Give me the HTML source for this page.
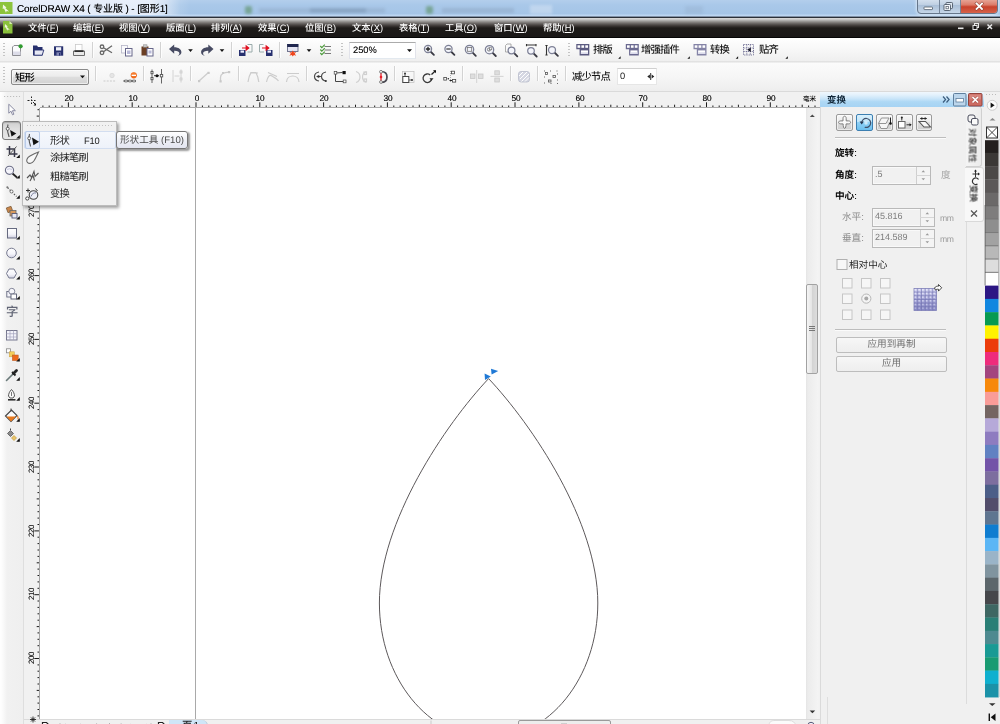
<!DOCTYPE html>
<html><head><meta charset="utf-8"><title>CorelDRAW X4</title>
<style>
*{box-sizing:border-box;margin:0;padding:0}
html,body{width:1000px;height:724px;overflow:hidden;background:#f0f0f0}
body{position:relative;-webkit-font-smoothing:antialiased;text-rendering:geometricPrecision;font-family:"Liberation Sans","Noto Sans CJK SC",sans-serif;font-size:9.5px;color:#000;line-height:1}
.a{position:absolute}
.t{position:absolute;white-space:nowrap;line-height:12px;height:12px;will-change:transform}
svg{position:absolute;overflow:visible}
#title{left:0;top:0;width:1000px;height:17px;background:linear-gradient(#b3ceec 0,#a9c8e9 5px,#a5c5e7 14px,#bcd6f2 15px,#bcd6f2 16px,#7f90a6 16px,#7f90a6 17px);overflow:hidden}
#menu{left:0;top:17px;width:1000px;height:21px;background:linear-gradient(#2a3038 0,#2a3038 1px,#d6d6d6 1px,#d2d2d2 2px,#aeadac 3.500px,#8a8785 5px,#5e5a58 7px,#3a3533 9px,#1e1b19 11px,#1a1817 19.500px,#060606 20px,#060606 21px)}
#menu .t{top:5px;color:#fff;font-size:9.300px;line-height:13px;height:13px;font-weight:500}
#menu u{text-decoration:underline;text-underline-offset:1px}
#tb1{left:0;top:38px;width:1000px;height:24px;background:linear-gradient(#ffffff,#f7f7f7 50%,#eeeeee)}
#tb2{left:0;top:62px;width:1000px;height:30px;background:linear-gradient(#e0e0e0 0,#fbfbfb 1px,#f6f6f6 50%,#ededed 100%)}
#toolbox{left:0;top:92px;width:24px;height:632px;background:linear-gradient(90deg,#ffffff 0,#fcfcfc 2px,#f1f1f1 7px,#efefef 100%);border-right:1px solid #dedede}
#rulerh{left:24px;top:92px;width:796px;height:16px;background:#f1f1f1}
#rulerv{left:24px;top:108px;width:16px;height:611px;background:#f1f1f1}
#canvas{left:40px;top:108px;width:766px;height:611px;background:#fff;overflow:hidden}
#vscroll{left:806px;top:108px;width:14px;height:611px;background:linear-gradient(90deg,#e5e5e5 0,#ececec 2px,#efefef 6px,#f4f4f4 12px,#f1f1f1 14px)}
#bottom{left:24px;top:719px;width:797px;height:5px;background:#f0f0f0;overflow:hidden}
#docker{left:820px;top:92px;width:165px;height:632px;background:#f0f0f0}
#palette{left:985px;top:92px;width:15px;height:632px;background:#f0f0f0}
.c{font-size:10.300px;letter-spacing:-.8px;font-weight:500}
.sep{position:absolute;width:1px;background:#d3d3d3;box-shadow:1px 0 0 #fdfdfd}
.grip{position:absolute;width:2px;background-image:repeating-linear-gradient(#c4c4c4 0,#c4c4c4 1px,transparent 1px,transparent 3px)}
</style></head><body>
<div id="title" class="a"><div class="a" style="left:0;top:0;width:1000px;height:15px;background:linear-gradient(90deg,rgba(250,250,255,.74) 0,rgba(250,250,255,.74) 150px,rgba(250,250,255,.5) 166px,rgba(255,255,255,.1) 180px,rgba(255,255,255,0) 190px)"></div><div class="a" style="left:205px;top:0;width:700px;height:16px;filter:blur(1.800px);opacity:.5"><div class="a" style="left:40px;top:6px;width:7px;height:8px;background:#4a8446;border-radius:2px"></div><div class="a" style="left:54px;top:8px;width:126px;height:5px;background:#8096b0;opacity:.6"></div><div class="a" style="left:105px;top:8px;width:56px;height:5px;background:#5f7894;opacity:.7"></div><div class="a" style="left:221px;top:6px;width:7px;height:8px;background:#4a8446;border-radius:2px"></div><div class="a" style="left:237px;top:8px;width:72px;height:5px;background:#7f94ad;opacity:.65"></div><div class="a" style="left:325px;top:5px;width:22px;height:9px;background:#e6eef8;opacity:.8"></div><div class="a" style="left:480px;top:6px;width:18px;height:8px;background:#8fa8c4;opacity:.6"></div></div><svg style="left:0;top:1px" width="13" height="14" viewBox="0 0 13 14"><rect x="0" y="1" width="12.5" height="12" fill="#8cc43c"/><path d="M3 3.5l3.5 3-1.2.6 3.7 3.4-2.4-.4-.6 1.6-2-4.2-1.3.6z" fill="#f2f8e6"/></svg><span class="t" style="left:17px;top:4px;font-size:10px;letter-spacing:-.12px;color:#000;text-shadow:0 0 .4px rgba(0,0,0,.55)">CorelDRAW X4 ( 专业版 ) - [图形1]</span><div class="a" style="left:917px;top:-3px;width:81px;height:17px;border:1px solid #66768a;border-radius:0 0 4px 4px;overflow:hidden;box-shadow:0 0 3px 1px rgba(255,255,255,.55);background:linear-gradient(#dbe6f2,#bccde1 50%,#abc0d8 50%,#c6d6e8)"><div class="a" style="left:21px;top:0;width:1px;height:17px;background:#74859a"></div><div class="a" style="left:42px;top:0;width:39px;height:17px;border-left:1px solid #74859a;background:linear-gradient(#eab3a6,#dc7c6a 40%,#c8412b 52%,#d45f48 85%,#e6977a)"></div></div><svg style="left:917px;top:0" width="83" height="15" viewBox="0 0 83 15"><rect x="7" y="7" width="8.500" height="2.600" rx=".6" fill="#fff" stroke="#4d5866" stroke-width=".8"/><rect x="29" y="2.500" width="6.500" height="6" rx=".8" fill="#dfe8f2" stroke="#4d5866" stroke-width=".9"/><rect x="27" y="4.500" width="6.500" height="6" rx=".8" fill="#f4f7fb" stroke="#4d5866" stroke-width=".9"/><rect x="29" y="6.500" width="2.500" height="2.300" fill="#fff" stroke="#4d5866" stroke-width=".7"/><path d="M59.500 3.500l5.500 5.500M65 3.500l-5.500 5.500" stroke="#7a3226" stroke-width="3" stroke-linecap="square" opacity=".75"/><path d="M59.500 3.500l5.500 5.500M65 3.500l-5.500 5.500" stroke="#fff" stroke-width="1.800" stroke-linecap="square"/></svg></div>
<div id="menu" class="a"><svg style="left:3px;top:4px" width="10" height="13" viewBox="0 0 10 13"><path d="M0 0h6.500l3 3v9.500h-9.500z" fill="#8ac03c"/><path d="M6.500 0l3 3h-3z" fill="#d8ebb5"/><path d="M2 3l2.800 2.400-1 .5 3 2.800-2-.3-.5 1.300-1.600-3.400-1 .5z" fill="#eef6dc"/></svg><span class="t" style="left:28px">文件(<u>F</u>)</span><span class="t" style="left:73px">编辑(<u>E</u>)</span><span class="t" style="left:119px">视图(<u>V</u>)</span><span class="t" style="left:166px">版面(<u>L</u>)</span><span class="t" style="left:211px">排列(<u>A</u>)</span><span class="t" style="left:258px">效果(<u>C</u>)</span><span class="t" style="left:305px">位图(<u>B</u>)</span><span class="t" style="left:352px">文本(<u>X</u>)</span><span class="t" style="left:399px">表格(<u>T</u>)</span><span class="t" style="left:445px">工具(<u>O</u>)</span><span class="t" style="left:494px">窗口(<u>W</u>)</span><span class="t" style="left:543px">帮助(<u>H</u>)</span><svg style="left:955px;top:4px" width="42" height="12" viewBox="0 0 42 12"><rect x="3" y="6.500" width="5.500" height="1.600" fill="#e8e8e8"/><rect x="19.500" y="2.500" width="4" height="4" fill="none" stroke="#e8e8e8" stroke-width="1"/><rect x="18" y="4.500" width="4" height="4" fill="#151313" stroke="#e8e8e8" stroke-width="1"/><path d="M32.500 3.500l4.500 4.500M37 3.500l-4.500 4.500" stroke="#e8e8e8" stroke-width="1.500"/></svg></div>

<div id="tb1" class="a"></div><div id="tb2" class="a"></div><div class="a" style="left:0;top:61px;width:1000px;height:1px;background:#e2e2e2"></div><div class="a" style="left:0;top:91px;width:1000px;height:1px;background:#dadada"></div><div class="grip" style="left:3px;top:43px;height:15px"></div><div class="grip" style="left:341px;top:43px;height:15px"></div><div class="grip" style="left:568px;top:43px;height:15px"></div><div class="grip" style="left:3px;top:67px;height:18px"></div><div class="sep" style="left:92px;top:42px;height:16px"></div><div class="sep" style="left:160px;top:42px;height:16px"></div><div class="sep" style="left:231px;top:42px;height:16px"></div><div class="sep" style="left:279px;top:42px;height:16px"></div><div class="sep" style="left:95px;top:66px;height:15px"></div><div class="sep" style="left:143px;top:66px;height:15px"></div><div class="sep" style="left:190px;top:66px;height:15px"></div><div class="sep" style="left:238px;top:66px;height:15px"></div><div class="sep" style="left:306px;top:66px;height:15px"></div><div class="sep" style="left:394px;top:66px;height:15px"></div><div class="sep" style="left:462px;top:66px;height:15px"></div><div class="sep" style="left:510px;top:66px;height:15px"></div><div class="sep" style="left:537px;top:66px;height:15px"></div><div class="sep" style="left:565px;top:66px;height:15px"></div><div class="a" style="left:349px;top:42px;width:67px;height:17px;background:#fff;border-top:1px solid #ababab;border-left:1px solid #e2e3ea;border-right:1px solid #e2e3ea;border-bottom:1px solid #e3e9ef"></div><span class="t" style="left:352.500px;top:44px;font-size:9.300px;color:#111;text-shadow:0 0 .4px rgba(0,0,0,.5)">250%</span><span class="t c" style="left:592.5px;top:44.500px;color:#161616">排版</span><span class="t c" style="left:640.5px;top:44.500px;color:#161616">增强插件</span><span class="t c" style="left:709.5px;top:44.500px;color:#161616">转换</span><span class="t c" style="left:758.5px;top:44.500px;color:#161616">贴齐</span><div class="a" style="left:11px;top:69px;width:78px;height:16px;border:1px solid #8a8a8a;border-radius:2px;background:linear-gradient(#f4f4f4,#ececec 45%,#dedede 50%,#d2d2d2);box-shadow:inset 0 0 0 1px rgba(255,255,255,.6)"></div><span class="t c" style="left:15px;top:72.500px;color:#000">矩形</span><span class="t c" style="left:572px;top:71.500px;color:#161616">减少节点</span><div class="a" style="left:617px;top:68px;width:40px;height:17px;background:#fff;border:1px solid #e6e6e6;border-top-color:#d0d0d0"></div><span class="t" style="left:619.500px;top:70px;font-size:9.300px;color:#222">0</span><svg style="left:0;top:0" width="1000" height="100" viewBox="0 0 1000 100"><path d="M12.500 47l1.500-1.500h6.500v10h-8z" fill="#fbfbfd" stroke="#8d8d93" stroke-width="1"/><path d="M13 51.500h7.500v3.500h-7.500z" fill="#dcdce8"/><circle cx="20.600" cy="46.300" r="2.100" fill="#2f9b2f"/><path d="M33 45.500h4l1 1.500h4.500v8.500h-9.500z" fill="#27306e"/><path d="M34.200 50h9.600l-1.600 5.200h-8z" fill="#e6e8f4" stroke="#27306e" stroke-width=".9"/><rect x="54" y="46.300" width="9.200" height="9.400" fill="#27306e"/><rect x="56" y="47.200" width="5.200" height="3.300" fill="#f2f3fa"/><rect x="56.500" y="52.300" width="4.200" height="3.400" fill="#8187b5"/><rect x="59" y="53" width="1.200" height="2.600" fill="#27306e"/><rect x="75.500" y="44.500" width="6.500" height="6" fill="#fff" stroke="#c4c4c4" stroke-width=".7"/><path d="M73.500 51h11v4.500h-11z" fill="#e9e9e9" stroke="#6e6e6e" stroke-width="1"/><rect x="74.500" y="50.300" width="9" height="1.700" fill="#2e2e2e"/><g fill="none" stroke="#666" stroke-width="1.300"><circle cx="102" cy="46.800" r="1.800"/><circle cx="102" cy="52.800" r="1.800"/><path d="M103.500 47.800l8.500 5M103.500 51.800l8.500-6"/></g><rect x="121.500" y="45.500" width="6" height="7.500" fill="#fafafc" stroke="#b5b5c6" stroke-width=".8"/><rect x="125.500" y="48.500" width="6.500" height="7.500" fill="#fff" stroke="#66668a" stroke-width="1"/><rect x="127" y="50.500" width="3.500" height="3.500" fill="#b9b9d8"/><rect x="141.500" y="46.500" width="7" height="9" fill="#6b3f24"/><rect x="143.500" y="44.800" width="3.500" height="2.400" fill="#c9c9c9" stroke="#888" stroke-width=".5"/><rect x="147" y="48.500" width="6" height="7.500" fill="#fff" stroke="#66668a" stroke-width="1"/><rect x="148.500" y="50.500" width="3" height="3" fill="#b9b9d8"/><path d="M169 49l5.200-4.600v2.900c4.500 0 7.200 2.300 7.200 5 0 1.800-1.300 3.200-3.800 3.600 1.300-.9 1.800-1.700 1.800-2.700 0-1.400-1.700-2.400-5.200-2.400v2.900z" fill="#474b63"/><path d="M188.2 49.3h4.6l-2.3 2.6z" fill="#111"/><path d="M213.500 49l-5.200-4.600v2.900c-4.500 0-7.200 2.300-7.200 5 0 1.800 1.300 3.200 3.800 3.600-1.300-.9-1.800-1.700-1.800-2.700 0-1.400 1.700-2.400 5.200-2.400v2.900z" fill="#474b63"/><path d="M219.7 49.3h4.6l-2.3 2.6z" fill="#111"/><path d="M247.500 44.500h4.500v7.500h-4.500" fill="none" stroke="#9aa" stroke-width="1"/><rect x="239" y="50" width="6.500" height="6" fill="#27306e"/><rect x="240.500" y="50.500" width="3.500" height="2.200" fill="#eef"/><path d="M242 48h6M246.200 46l2.500 2-2.500 2z" stroke="#e01020" stroke-width="1.200" fill="#e01020"/><path d="M263.500 44.500h-4v7.500h4.500" fill="none" stroke="#9aa" stroke-width="1"/><rect x="266" y="50" width="6.500" height="6" fill="#27306e"/><rect x="267.500" y="50.500" width="3.500" height="2.200" fill="#eef"/><path d="M262 48h6M266.200 46l2.500 2-2.500 2z" stroke="#e01020" stroke-width="1.200" fill="#e01020"/><rect x="287.500" y="44.500" width="10.500" height="7" fill="#e4e4f2" stroke="#555a78" stroke-width=".8"/><rect x="287.200" y="44" width="11.100" height="3" fill="#20264f"/><path d="M292.800 50.500l1.200 2 2.200-.6-1.400 1.800 1.400 2-2.300-.7-1.100 1.500-1.100-1.500-2.300.7 1.400-2-1.400-1.800 2.200.6z" fill="#f0451c"/><path d="M306.7 49.3h4.6l-2.3 2.6z" fill="#111"/><path d="M320.300 46l1.500 1.600 3-3" fill="none" stroke="#4d9c3c" stroke-width="1.200"/><path d="M324.500 46.5h6.500" stroke="#777" stroke-width="1"/><path d="M320.300 49.5l1.500 1.600 3-3" fill="none" stroke="#4d9c3c" stroke-width="1.200"/><path d="M324.500 50.0h6.500" stroke="#777" stroke-width="1"/><path d="M320.300 53l1.500 1.600 3-3" fill="none" stroke="#4d9c3c" stroke-width="1.200"/><path d="M324.500 53.5h6.500" stroke="#777" stroke-width="1"/><path d="M407.0 49.3h5l-2.5 2.8z" fill="#111"/><path d="M430.5 51.5l3.400 3.400" stroke="#3a3a44" stroke-width="1.800" stroke-linecap="round"/><circle cx="428" cy="49" r="3.6" fill="#f4f5fb" stroke="#7d8096" stroke-width="1.250"/><path d="M425.800 49h4.400M428 46.800v4.400" stroke="#222" stroke-width="1.300"/><path d="M451.0 51.5l3.400 3.400" stroke="#3a3a44" stroke-width="1.800" stroke-linecap="round"/><circle cx="448.5" cy="49" r="3.6" fill="#f4f5fb" stroke="#7d8096" stroke-width="1.250"/><path d="M446.300 49h4.400" stroke="#444" stroke-width="1.300"/><path d="M472.4 52.4l3.400 3.400" stroke="#3a3a44" stroke-width="1.800" stroke-linecap="round"/><circle cx="469.5" cy="49.5" r="4.2" fill="#f4f5fb" stroke="#7d8096" stroke-width="1.250"/><rect x="467.300" y="47.500" width="4.400" height="3.800" fill="none" stroke="#777" stroke-width=".8"/><path d="M492.4 52.6l3.400 3.400" stroke="#3a3a44" stroke-width="1.800" stroke-linecap="round"/><circle cx="489.5" cy="49.7" r="4.2" fill="#f4f5fb" stroke="#7d8096" stroke-width="1.250"/><circle cx="489" cy="49.500" r="1.600" fill="none" stroke="#666" stroke-width=".8"/><rect x="489.500" y="47.800" width="2.300" height="2" fill="#fff" stroke="#666" stroke-width=".6"/><path d="M505.500 45.500l1.500-1.500h4v8h-5.500z" fill="#fafafa" stroke="#999" stroke-width=".8"/><path d="M513.9 52.9l3.400 3.400" stroke="#3a3a44" stroke-width="1.800" stroke-linecap="round"/><circle cx="511.5" cy="50.5" r="3.4" fill="#f4f5fb" stroke="#7d8096" stroke-width="1.250"/><path d="M526 45h10.500M526.500 44v2.200M536 44v2.200" stroke="#333" stroke-width="1.100"/><path d="M533.3 53.1l3.400 3.400" stroke="#3a3a44" stroke-width="1.800" stroke-linecap="round"/><circle cx="531" cy="50.8" r="3.3" fill="#f4f5fb" stroke="#7d8096" stroke-width="1.250"/><path d="M546.500 45v10.500M545.400 45.500h2.200M545.400 55h2.200" stroke="#333" stroke-width="1.100"/><path d="M554.5 52.5l3.400 3.400" stroke="#3a3a44" stroke-width="1.800" stroke-linecap="round"/><circle cx="552" cy="50" r="3.5" fill="#f4f5fb" stroke="#7d8096" stroke-width="1.250"/><g opacity="1"><path d="M576.3 44h13v11.500h-9.700v-6.300h-3.300z" fill="#5b5a80"/><rect x="577.5" y="45.3" width="2.700" height="2.500" fill="#fff"/><rect x="581.4" y="45.3" width="2.700" height="2.500" fill="#fff"/><rect x="585.3" y="45.3" width="2.700" height="2.500" fill="#fff"/><rect x="580.9" y="50.4" width="7.100" height="3.600" fill="#fff"/><rect x="580.9" y="52.3" width="7.100" height="1.700" fill="#dcdcec"/></g><g opacity="1"><path d="M625.8 44h13v11.500h-9.700v-6.300h-3.300z" fill="#6a6990"/><rect x="627.0" y="45.3" width="2.700" height="2.500" fill="#fff"/><rect x="630.9" y="45.3" width="2.700" height="2.500" fill="#fff"/><rect x="634.8" y="45.3" width="2.700" height="2.500" fill="#fff"/><rect x="630.4" y="50.4" width="7.100" height="3.600" fill="#fff"/><rect x="630.4" y="52.3" width="7.100" height="1.700" fill="#dcdcec"/></g><g opacity="1"><path d="M693.5 44h13v11.500h-9.700v-6.300h-3.300z" fill="#8483a6"/><rect x="694.7" y="45.3" width="2.700" height="2.500" fill="#fff"/><rect x="698.6" y="45.3" width="2.700" height="2.500" fill="#fff"/><rect x="702.5" y="45.3" width="2.700" height="2.500" fill="#fff"/><rect x="698.1" y="50.4" width="7.100" height="3.600" fill="#fff"/><rect x="698.1" y="52.3" width="7.100" height="1.700" fill="#dcdcec"/></g><g stroke="#6a6990" stroke-width=".9" fill="none" stroke-dasharray="1.200 1"><rect x="743.500" y="44.500" width="10" height="10.500"/><path d="M746.800 44.500v10.500M750.300 44.500v10.500M743.500 48h10M743.500 51.500h10"/></g><path d="M750.800 47.500v4.500l-3.600-2.200z" fill="#1a1a2a"/><path d="M618.2 58.7l2.400-2.400v2.400z" fill="#111"/><path d="M687.4000000000001 58.7l2.400-2.400v2.400z" fill="#111"/><path d="M735.7 58.7l2.400-2.400v2.400z" fill="#111"/><path d="M785.4000000000001 58.7l2.400-2.400v2.400z" fill="#111"/><path d="M80.0 75.5h5l-2.5 2.8z" fill="#111"/><g opacity=".55"><circle cx="112" cy="75.500" r="2.200" fill="#d8d8d8" stroke="#bdbdbd" stroke-width=".8"/><path d="M103.500 81h12" stroke="#c4c4c4" stroke-width="1.400" stroke-dasharray="2 1.200"/></g><circle cx="133.800" cy="75.300" r="3.100" fill="#f26a1b"/><circle cx="133.800" cy="74.600" r="2.200" fill="#f68b3c" opacity=".6"/><rect x="131.600" y="74.700" width="4.400" height="1.300" fill="#fff"/><path d="M123.500 81h12.500" stroke="#555" stroke-width="1.500"/><g fill="#f4f4f4" stroke="#555" stroke-width=".6"><rect x="125" y="80" width="2" height="2"/><rect x="129" y="80" width="2" height="2"/><rect x="133" y="80" width="2" height="2"/></g><g stroke="#555" stroke-width=".9" fill="#fff"><path d="M152 69.500v13.500M161.500 69v14.500" fill="none"/><rect x="151" y="71.500" width="2" height="2.200"/><rect x="151" y="77.500" width="2" height="2.200"/><rect x="160.300" y="74.500" width="2.400" height="2.400"/><path d="M154 75.700h5" stroke="#222"/></g><circle cx="157" cy="75.700" r="1.500" fill="#111"/><g stroke="#cfcfcf" stroke-width=".9" fill="none"><path d="M173 70v12M181 69.500v13M174.500 76h5"/><rect x="180" y="71" width="2" height="2"/><rect x="180" y="78" width="2" height="2"/></g><g stroke="#cdcdcd" stroke-width="1.300" fill="none"><path d="M199 81l9.500-8.500"/><path d="M220.500 81.500v-4c0-3 2-5 8.500-5.300"/></g><g fill="#c9c9c9"><rect x="198" y="80" width="2.200" height="2.200"/><rect x="207.500" y="71.800" width="2.200" height="2.200"/><rect x="219.500" y="80.300" width="2.200" height="2.200"/><rect x="228" y="71" width="2.200" height="2.200"/><rect x="222" y="72" width="2" height="2"/></g><g stroke="#cccccc" stroke-width="1.200" fill="none"><path d="M248 82c.5-4 1.500-7 3-9.300h5c1.300 2.300 2.300 5.300 2.800 9.300M250 73h8"/><path d="M266.500 82c1-5 3-8 5.500-6s4.500 2 6.500 5M268 72.500l9 4"/><path d="M286.500 82c.5-8 12-8 12.500 0M287 73.500h12"/></g><g fill="none" stroke="#4a4a4a" stroke-width="1.200"><path d="M319 72c-3 .5-4.500 2.500-4.500 4.500s1.500 4 4.500 4.500"/><path d="M326 72c-3 .5-4.500 2.500-4.500 4.500s1.500 4 4.500 4.500"/></g><path d="M316.500 76.500h4.500" stroke="#4a4a4a" stroke-width="1"/><circle cx="318.500" cy="76.500" r="1.200" fill="#333"/><circle cx="325.800" cy="81" r="1.100" fill="#333"/><g fill="none" stroke="#444" stroke-width="1"><path d="M335.500 73v8.500h9M336 73l6.500-.5"/></g><rect x="334.200" y="71.500" width="2.600" height="2.600" fill="#fff" stroke="#444" stroke-width=".7"/><rect x="342.500" y="71" width="3.200" height="3.200" fill="#111"/><rect x="343.200" y="80" width="2.800" height="2.800" fill="#fff" stroke="#444" stroke-width=".7"/><g fill="none" stroke="#cfcfcf" stroke-width="1.200"><path d="M356 71.500c3 1 4 3 4 5.500s-1 4.500-4 5.500M366.500 71.500c-3 1-4 3-4 5.500s1 4.500 4 5.500"/><rect x="364" y="72" width="2.500" height="2.500"/><rect x="364" y="79" width="2.500" height="2.500"/></g><path d="M381 71.500c4 0 6 2.500 6 5.500s-2 5.500-6 5.500" fill="none" stroke="#4a4a52" stroke-width="1.700"/><path d="M381 73v8" stroke="#e8202a" stroke-width="1.300"/><circle cx="381" cy="77" r="1.300" fill="#e8202a"/><circle cx="381" cy="71.800" r="1.400" fill="#fff" stroke="#555" stroke-width=".7"/><circle cx="381" cy="82" r="1.400" fill="#fff" stroke="#555" stroke-width=".7"/><rect x="402.500" y="71.500" width="11.500" height="11" fill="none" stroke="#bdbdbd" stroke-width=".7"/><rect x="402.800" y="76.500" width="6" height="6" fill="#fff" stroke="#444" stroke-width="1"/><circle cx="405" cy="73.500" r="1" fill="#333"/><path d="M405 73.500v3" stroke="#333" stroke-width=".8"/><circle cx="412" cy="80" r="1" fill="#333"/><path d="M409 80h3" stroke="#333" stroke-width=".8"/><path d="M431.500 79.500a4.300 4.300 0 1 1-1.300-4.500" fill="none" stroke="#3a3a3a" stroke-width="1.300"/><path d="M429.500 78.200h4l-2 2.600z" fill="#222"/><path d="M431.500 74.500l4-3.800" stroke="#222" stroke-width="1.200"/><path d="M433 70.200h3v3z" fill="#111"/><g fill="#fff" stroke="#444" stroke-width=".8"><rect x="451.500" y="71.200" width="3" height="2.600"/><rect x="443.800" y="77.500" width="2.800" height="2.600"/><rect x="452.500" y="79.500" width="3.200" height="2.600"/></g><path d="M450.500 71v11" stroke="#888" stroke-width=".7" stroke-dasharray="1 1"/><circle cx="448.300" cy="78.800" r=".8" fill="#222"/><path d="M449.500 80.500h2.500" stroke="#222" stroke-width="1"/><g fill="#dedede" stroke="#c8c8c8" stroke-width=".8"><rect x="470.500" y="74" width="4.500" height="4.500"/><rect x="478.500" y="74" width="4.500" height="4.500"/><rect x="494.800" y="70.800" width="4.500" height="4"/><rect x="494.800" y="78" width="4.500" height="4"/></g><path d="M476.700 70v13M490.500 76.400h13" stroke="#cfcfcf" stroke-width=".9"/><rect x="518.500" y="71.500" width="11" height="10.500" rx="2.500" fill="#d5d7e2" stroke="#b9bccb" stroke-width=".8"/><path d="M520 79l7-7M521.500 81.500l7.500-7.500M519 76l4-4M525 81.500l4-4" stroke="#fff" stroke-width="1"/><g fill="none" stroke="#555" stroke-width=".8"><rect x="545.500" y="72.500" width="2" height="2"/><rect x="553" y="75.500" width="2.500" height="2"/><rect x="548.500" y="80" width="2.500" height="2"/></g><g fill="#666"><rect x="544" y="70.500" width="1" height="1"/><rect x="550" y="70.500" width="1" height="1"/><rect x="556.500" y="70.500" width="1" height="1"/><rect x="544" y="76.500" width="1" height="1"/><rect x="557" y="73.500" width="1" height="1"/><rect x="557" y="79.500" width="1" height="1"/><rect x="544" y="82.500" width="1" height="1"/><rect x="550.500" y="83" width="1" height="1"/><rect x="557" y="83" width="1" height="1"/></g><path d="M650.700 73v7" stroke="#333" stroke-width="1"/><path d="M647.300 76.500l2.600-2v4zM654.300 76.500l-2.600-2v4z" fill="#222"/></svg>
<style>.rl{font-size:8.300px;color:#111;letter-spacing:-.2px;text-shadow:0 0 .4px rgba(0,0,0,.6)}</style><div id="rulerh" class="a"></div><div id="rulerv" class="a"></div><svg style="left:0;top:0" width="1000" height="724" viewBox="0 0 1000 724"><path d="M42.9 105.5v2.0M49.2 105.5v2.0M55.6 105.5v2.0M62.0 105.5v2.0M68.4 102.3v5.2M74.8 105.5v2.0M81.1 105.5v2.0M87.5 105.5v2.0M93.9 105.5v2.0M100.3 104.7v2.8M106.7 105.5v2.0M113.0 105.5v2.0M119.4 105.5v2.0M125.8 105.5v2.0M132.2 102.3v5.2M138.6 105.5v2.0M145.0 105.5v2.0M151.3 105.5v2.0M157.7 105.5v2.0M164.1 104.7v2.8M170.5 105.5v2.0M176.9 105.5v2.0M183.2 105.5v2.0M189.6 105.5v2.0M196.0 102.3v5.2M202.4 105.5v2.0M208.8 105.5v2.0M215.1 105.5v2.0M221.5 105.5v2.0M227.9 104.7v2.8M234.3 105.5v2.0M240.7 105.5v2.0M247.0 105.5v2.0M253.4 105.5v2.0M259.8 102.3v5.2M266.2 105.5v2.0M272.6 105.5v2.0M279.0 105.5v2.0M285.3 105.5v2.0M291.7 104.7v2.8M298.1 105.5v2.0M304.5 105.5v2.0M310.9 105.5v2.0M317.2 105.5v2.0M323.6 102.3v5.2M330.0 105.5v2.0M336.4 105.5v2.0M342.8 105.5v2.0M349.1 105.5v2.0M355.5 104.7v2.8M361.9 105.5v2.0M368.3 105.5v2.0M374.7 105.5v2.0M381.0 105.5v2.0M387.4 102.3v5.2M393.8 105.5v2.0M400.2 105.5v2.0M406.6 105.5v2.0M413.0 105.5v2.0M419.3 104.7v2.8M425.7 105.5v2.0M432.1 105.5v2.0M438.5 105.5v2.0M444.9 105.5v2.0M451.2 102.3v5.2M457.6 105.5v2.0M464.0 105.5v2.0M470.4 105.5v2.0M476.8 105.5v2.0M483.1 104.7v2.8M489.5 105.5v2.0M495.9 105.5v2.0M502.3 105.5v2.0M508.7 105.5v2.0M515.0 102.3v5.2M521.4 105.5v2.0M527.8 105.5v2.0M534.2 105.5v2.0M540.6 105.5v2.0M547.0 104.7v2.8M553.3 105.5v2.0M559.7 105.5v2.0M566.1 105.5v2.0M572.5 105.5v2.0M578.9 102.3v5.2M585.2 105.5v2.0M591.6 105.5v2.0M598.0 105.5v2.0M604.4 105.5v2.0M610.8 104.7v2.8M617.1 105.5v2.0M623.5 105.5v2.0M629.9 105.5v2.0M636.3 105.5v2.0M642.7 102.3v5.2M649.1 105.5v2.0M655.4 105.5v2.0M661.8 105.5v2.0M668.2 105.5v2.0M674.6 104.7v2.8M681.0 105.5v2.0M687.3 105.5v2.0M693.7 105.5v2.0M700.1 105.5v2.0M706.5 102.3v5.2M712.9 105.5v2.0M719.2 105.5v2.0M725.6 105.5v2.0M732.0 105.5v2.0M738.4 104.7v2.8M744.8 105.5v2.0M751.1 105.5v2.0M757.5 105.5v2.0M763.9 105.5v2.0M770.3 102.3v5.2M776.7 105.5v2.0M783.1 105.5v2.0M789.4 105.5v2.0M795.8 105.5v2.0M802.2 104.7v2.8M808.6 105.5v2.0M815.0 105.5v2.0" stroke="#1c1c1c" stroke-width="1" fill="none"/><path d="M40 107.500h780" stroke="#a9a9a9" stroke-width="1"/><path d="M37.5 109.7h2.0M36.7 116.1h2.8M37.5 122.5h2.0M37.5 128.8h2.0M37.5 135.2h2.0M37.5 141.6h2.0M34.3 148.0h5.2M37.5 154.4h2.0M37.5 160.8h2.0M37.5 167.1h2.0M37.5 173.5h2.0M36.7 179.9h2.8M37.5 186.3h2.0M37.5 192.7h2.0M37.5 199.0h2.0M37.5 205.4h2.0M34.3 211.8h5.2M37.5 218.2h2.0M37.5 224.6h2.0M37.5 230.9h2.0M37.5 237.3h2.0M36.7 243.7h2.8M37.5 250.1h2.0M37.5 256.5h2.0M37.5 262.8h2.0M37.5 269.2h2.0M34.3 275.6h5.2M37.5 282.0h2.0M37.5 288.4h2.0M37.5 294.8h2.0M37.5 301.1h2.0M36.7 307.5h2.8M37.5 313.9h2.0M37.5 320.3h2.0M37.5 326.7h2.0M37.5 333.0h2.0M34.3 339.4h5.2M37.5 345.8h2.0M37.5 352.2h2.0M37.5 358.6h2.0M37.5 364.9h2.0M36.7 371.3h2.8M37.5 377.7h2.0M37.5 384.1h2.0M37.5 390.5h2.0M37.5 396.8h2.0M34.3 403.2h5.2M37.5 409.6h2.0M37.5 416.0h2.0M37.5 422.4h2.0M37.5 428.8h2.0M36.7 435.1h2.8M37.5 441.5h2.0M37.5 447.9h2.0M37.5 454.3h2.0M37.5 460.7h2.0M34.3 467.0h5.2M37.5 473.4h2.0M37.5 479.8h2.0M37.5 486.2h2.0M37.5 492.6h2.0M36.7 498.9h2.8M37.5 505.3h2.0M37.5 511.7h2.0M37.5 518.1h2.0M37.5 524.5h2.0M34.3 530.9h5.2M37.5 537.2h2.0M37.5 543.6h2.0M37.5 550.0h2.0M37.5 556.4h2.0M36.7 562.8h2.8M37.5 569.1h2.0M37.5 575.5h2.0M37.5 581.9h2.0M37.5 588.3h2.0M34.3 594.7h5.2M37.5 601.0h2.0M37.5 607.4h2.0M37.5 613.8h2.0M37.5 620.2h2.0M36.7 626.6h2.8M37.5 632.9h2.0M37.5 639.3h2.0M37.5 645.7h2.0M37.5 652.1h2.0M34.3 658.5h5.2M37.5 664.9h2.0M37.5 671.2h2.0M37.5 677.6h2.0M37.5 684.0h2.0M36.7 690.4h2.8M37.5 696.8h2.0M37.5 703.1h2.0M37.5 709.5h2.0M37.5 715.9h2.0" stroke="#1c1c1c" stroke-width="1" fill="none"/><path d="M39.500 108v611" stroke="#a4a4a4" stroke-width="1"/><g stroke="#222" stroke-width="1" fill="none"><path d="M27.500 100.500h2M31 100.500h1.500M34 100.500h1.500M31.500 96.500v1.500M31.500 99.500v1.500M31.500 102.500v1.500" /><path d="M33 102l2.500 2.500"/></g><path d="M33.500 105.500h2.500v-2.500z" fill="#111"/></svg><span class="t rl" style="left:59.0px;top:91.500px;width:20px;text-align:center">20</span><span class="t rl" style="left:122.8px;top:91.500px;width:20px;text-align:center">10</span><span class="t rl" style="left:186.6px;top:91.500px;width:20px;text-align:center">0</span><span class="t rl" style="left:250.4px;top:91.500px;width:20px;text-align:center">10</span><span class="t rl" style="left:314.2px;top:91.500px;width:20px;text-align:center">20</span><span class="t rl" style="left:378.0px;top:91.500px;width:20px;text-align:center">30</span><span class="t rl" style="left:441.8px;top:91.500px;width:20px;text-align:center">40</span><span class="t rl" style="left:505.6px;top:91.500px;width:20px;text-align:center">50</span><span class="t rl" style="left:569.5px;top:91.500px;width:20px;text-align:center">60</span><span class="t rl" style="left:633.3px;top:91.500px;width:20px;text-align:center">70</span><span class="t rl" style="left:697.1px;top:91.500px;width:20px;text-align:center">80</span><span class="t rl" style="left:760.9px;top:91.500px;width:20px;text-align:center">90</span><span class="t" style="left:803px;top:95px;font-size:6.600px;line-height:9px;height:9px;color:#000;font-weight:500">毫米</span><span class="t rl" style="left:21.5px;top:142.6px;width:20px;text-align:center;transform:rotate(-90deg);transform-origin:50% 50%;height:10px;line-height:10px;letter-spacing:-.3px;font-size:7.800px;text-shadow:0 0 .3px rgba(0,0,0,.4)">280</span><span class="t rl" style="left:21.5px;top:206.4px;width:20px;text-align:center;transform:rotate(-90deg);transform-origin:50% 50%;height:10px;line-height:10px;letter-spacing:-.3px;font-size:7.800px;text-shadow:0 0 .3px rgba(0,0,0,.4)">270</span><span class="t rl" style="left:21.5px;top:270.2px;width:20px;text-align:center;transform:rotate(-90deg);transform-origin:50% 50%;height:10px;line-height:10px;letter-spacing:-.3px;font-size:7.800px;text-shadow:0 0 .3px rgba(0,0,0,.4)">260</span><span class="t rl" style="left:21.5px;top:334.0px;width:20px;text-align:center;transform:rotate(-90deg);transform-origin:50% 50%;height:10px;line-height:10px;letter-spacing:-.3px;font-size:7.800px;text-shadow:0 0 .3px rgba(0,0,0,.4)">250</span><span class="t rl" style="left:21.5px;top:397.8px;width:20px;text-align:center;transform:rotate(-90deg);transform-origin:50% 50%;height:10px;line-height:10px;letter-spacing:-.3px;font-size:7.800px;text-shadow:0 0 .3px rgba(0,0,0,.4)">240</span><span class="t rl" style="left:21.5px;top:461.6px;width:20px;text-align:center;transform:rotate(-90deg);transform-origin:50% 50%;height:10px;line-height:10px;letter-spacing:-.3px;font-size:7.800px;text-shadow:0 0 .3px rgba(0,0,0,.4)">230</span><span class="t rl" style="left:21.5px;top:525.5px;width:20px;text-align:center;transform:rotate(-90deg);transform-origin:50% 50%;height:10px;line-height:10px;letter-spacing:-.3px;font-size:7.800px;text-shadow:0 0 .3px rgba(0,0,0,.4)">220</span><span class="t rl" style="left:21.5px;top:589.3px;width:20px;text-align:center;transform:rotate(-90deg);transform-origin:50% 50%;height:10px;line-height:10px;letter-spacing:-.3px;font-size:7.800px;text-shadow:0 0 .3px rgba(0,0,0,.4)">210</span><span class="t rl" style="left:21.5px;top:653.1px;width:20px;text-align:center;transform:rotate(-90deg);transform-origin:50% 50%;height:10px;line-height:10px;letter-spacing:-.3px;font-size:7.800px;text-shadow:0 0 .3px rgba(0,0,0,.4)">200</span>
<div id="canvas" class="a"></div><div id="vscroll" class="a"></div><div id="bottom" class="a" style="border-top:1px solid #dadada"><div class="a" style="left:145px;top:0;width:39px;height:6px;background:#cfe6f8;border-radius:0 6px 0 0;border-right:1px solid #b5c9da"></div><span class="t" style="left:70px;top:1px;font-size:9px;color:#444;letter-spacing:3px">1 / 1</span><span class="t c" style="left:158px;top:1px;color:#222">页 1</span><svg style="left:0;top:0" width="797" height="5" viewBox="0 0 797 5"><path d="M18.500 2.500h4l3 3v2h-7z" fill="#fff" stroke="#222" stroke-width="1.200"/><path d="M134.500 2.500h4l3 3v2h-7z" fill="#fff" stroke="#222" stroke-width="1.200"/><path d="M36 3.500v4M39 6l3-2v4zM54 6l3-2v4zM106 4l3 2.500-3 2zM122 4l3 2.500-3 2zM127 3.500v4" fill="#555" stroke="#555" stroke-width=".6"/><rect x="406.500" y="0.500" width="1" height="6" fill="#c9c9c9"/><rect x="494.500" y="0.500" width="92" height="8" rx="1.500" fill="#ededed" stroke="#9a9a9a" stroke-width="1"/><path d="M538 3.500v3M540 3.500v3M542 3.500v3" stroke="#666" stroke-width=".9"/><path d="M745 6c0-4 2-5.500 6-5.500h14c4 0 6 2 7 5.500z" fill="#fbfbfb" stroke="#d6d6d6" stroke-width=".8"/><circle cx="787" cy="5.500" r="3.200" fill="#eef0f8" stroke="#555a78" stroke-width="1"/></svg></div><svg style="left:24px;top:712px" width="16" height="12" viewBox="0 0 16 12"><g stroke="#222" stroke-width=".9" fill="none"><path d="M6 7.500h6M9 4.500v6M7 5.500l4 4M11 5.500l-4 4"/></g></svg><svg style="left:0;top:0" width="1000" height="719" viewBox="0 0 1000 719"><clipPath id="cv"><rect x="40" y="108" width="766" height="611"/></clipPath><g clip-path="url(#cv)"><path d="M195.500 108v611" stroke="#a9a9a9" stroke-width="1"/><path d="M488.600 378.600C445.300 424.500 379.400 522 379.400 603C379.400 677.800 428.300 738.500 488.600 738.500C548.900 738.500 597.800 677.800 597.800 603C597.800 522 531.900 424.500 488.600 378.600Z" fill="none" stroke="#5c585a" stroke-width="1"/><path d="M484.600 373.400l6.200 3.200-5.800 3.400z" fill="#1f79d6"/><path d="M491 368.800l7.200 2.200-6.600 3.600z" fill="#1f79d6"/></g><path d="M809.800 117.100l2.500-2.500 2.500 2.500z" fill="#4a4a4a"/><path d="M809.600 710.500h5.600l-2.800 2.700z" fill="#333"/></svg><div class="a" style="left:806px;top:284px;width:12px;height:89.500px;border:1px solid #a2a2a2;border-radius:2px;background:linear-gradient(90deg,#f5f5f5,#e6e6e6 45%,#d3d3d3 50%,#dddddd)"></div><svg style="left:809px;top:326px" width="6" height="6" viewBox="0 0 6 6"><path d="M0 .5h5.500M0 2.500h5.500M0 4.500h5.500" stroke="#777" stroke-width="1" shape-rendering="crispEdges"/></svg>
<div id="toolbox" class="a"></div><div class="a" style="left:2px;top:121px;width:19px;height:19px;border:1px solid #7a7a7a;border-radius:3px;background:linear-gradient(#cfcfcf,#dedede 40%,#e6e6e6);box-shadow:inset 0 1px 1px rgba(0,0,0,.18)"></div><svg style="left:0;top:0" width="40" height="724" viewBox="0 0 40 724"><path d="M4 96.500h16" stroke="#bdbdbd" stroke-width="1.200" stroke-dasharray="1.200 1.800"/><path d="M8.800 104.200v9l2.200-2 1.500 3.600 1.400-.6-1.500-3.500h3z" fill="#fdfdfd" stroke="#8b8ca3" stroke-width="1"/><path d="M8.0 124.5c-1 3-.8 6 0 8.500s1 3 1 4" fill="none" stroke="#555" stroke-width="1.100"/><circle cx="7.7" cy="128.8" r="1.500" fill="#fff" stroke="#444" stroke-width=".8"/><path d="M10.1 130.0l6.200 3.600-4.800 2.800z" fill="#111"/><path d="M19.800 134.9v3.600h-3.600z" fill="#111"/><g stroke="#3a3a4a" stroke-width="1.500" fill="none"><path d="M9.500 146v8h8M6.500 149h8v8"/></g><path d="M8 156l8.500-9.500" stroke="#555" stroke-width="1"/><path d="M19.800 154.4v3.600h-3.600z" fill="#111"/><path d="M12.500 173.500l4.500 4" stroke="#222" stroke-width="1.700"/><circle cx="9.500" cy="170.300" r="4.100" fill="#f5f5fb" stroke="#6d6f88" stroke-width="1.100"/><path d="M7 169.500q2.500-1.500 5 0" stroke="#c9cbe0" stroke-width="1" fill="none"/><path d="M19.800 174.9v3.600h-3.600z" fill="#111"/><path d="M7.500 187.500l9 9" stroke="#555" stroke-width="1.100" stroke-dasharray="1.600 1.400"/><circle cx="11.500" cy="191.500" r="1.500" fill="#fff" stroke="#555" stroke-width=".8"/><circle cx="7.300" cy="187.300" r="1" fill="#777"/><path d="M19.800 195.1v3.600h-3.600z" fill="#111"/><rect x="7" y="207" width="5" height="5" transform="rotate(-20 9.500 209.500)" fill="#c9864a" stroke="#7a5a3a" stroke-width=".7"/><rect x="10" y="210.500" width="6" height="5.500" fill="#d99a5c" stroke="#666" stroke-width=".8"/><rect x="12" y="213.500" width="5" height="4.500" fill="#e9e9f3" stroke="#555a78" stroke-width=".9"/><path d="M19.800 215.9v3.600h-3.600z" fill="#111"/><defs><linearGradient id="lg1" x1="0" y1="0" x2="0" y2="1"><stop offset="0" stop-color="#fff"/><stop offset=".6" stop-color="#f4f4fa"/><stop offset="1" stop-color="#cfcfe0"/></linearGradient></defs><rect x="7.500" y="228.500" width="9" height="9.500" fill="url(#lg1)" stroke="#666a80" stroke-width="1"/><path d="M19.800 235.9v3.600h-3.600z" fill="#111"/><circle cx="11.500" cy="253" r="4.800" fill="url(#lg1)" stroke="#777a90" stroke-width="1"/><path d="M19.800 255.9v3.600h-3.600z" fill="#111"/><path d="M6.500 273.500l2.500-4.500h5l2.500 4.500-2.500 4.500h-5z" fill="url(#lg1)" stroke="#777a90" stroke-width="1"/><path d="M19.800 275.90000000000003v3.600h-3.600z" fill="#111"/><rect x="6.800" y="291.500" width="6" height="5.500" fill="#f4f4fa" stroke="#666a80" stroke-width=".9"/><circle cx="11.800" cy="291.300" r="3" fill="#f7f7fb" stroke="#777a90" stroke-width=".9"/><rect x="11" y="294" width="5.500" height="5" fill="#fff" stroke="#555a70" stroke-width=".9"/><path d="M19.800 295.90000000000003v3.600h-3.600z" fill="#111"/><rect x="6.500" y="330.500" width="10.500" height="9.500" fill="#f3f3fa" stroke="#77788f" stroke-width="1"/><path d="M6.500 333.700h10.500M6.500 337h10.500M10 330.500v9.500M13.500 330.500v9.500" stroke="#a3a4bd" stroke-width=".7"/><rect x="6.500" y="348.800" width="4" height="4" fill="#fff" stroke="#888" stroke-width=".8"/><rect x="9.300" y="351.800" width="5" height="5" fill="#f2cf5e" stroke="#caa040" stroke-width=".5"/><rect x="12.400" y="355" width="5.800" height="5.600" fill="#ec6a1e" stroke="#b4541c" stroke-width=".5"/><path d="M19.800 357.90000000000003v3.600h-3.600z" fill="#111"/><path d="M6.500 380.500l7-7" stroke="#6a7a7a" stroke-width="1.600" stroke-linecap="round"/><path d="M12 372l3.500 3.500" stroke="#222" stroke-width="1.800"/><path d="M13.500 373.500l3-3" stroke="#222" stroke-width="2.800" stroke-linecap="round"/><path d="M19.800 377.1v3.600h-3.600z" fill="#111"/><path d="M11.500 389.500c-2 2-3 4.500-3 6.500l1.500 2h3l1.500-2c0-2-1-4.500-3-6.500z" fill="#fafafa" stroke="#555" stroke-width="1"/><path d="M11.500 392v4" stroke="#555" stroke-width=".8"/><path d="M8 399.800h7.500" stroke="#222" stroke-width="1.500"/><path d="M19.800 397.1v3.600h-3.600z" fill="#111"/><path d="M5.500 416l6-6 5.500 5.500-6 6z" fill="#fbfbfb" stroke="#444" stroke-width="1.100"/><path d="M6.500 416.500h9.500l-5 5z" fill="#e8791c"/><path d="M11 408.500v3" stroke="#444" stroke-width="1"/><path d="M17.500 416c.8 1.500 1 2.500.3 3.300" stroke="#e8791c" stroke-width="1.200" fill="none"/><path d="M19.800 418.1v3.600h-3.600z" fill="#111"/><path d="M7.500 433.500l3-3 3 3-3 3z" fill="#8a8a8a" stroke="#555" stroke-width=".8"/><path d="M11.500 438l2.500-2.500 2.500 2.500-2.500 2.500z" fill="#e9c46a" stroke="#b8902a" stroke-width=".6"/><path d="M10.500 430v-1.500" stroke="#444" stroke-width="1"/><path d="M19.800 438.1v3.600h-3.600z" fill="#111"/></svg><span class="t" style="left:5.500px;top:306px;font-size:12.400px;color:#626676;line-height:13px;height:13px;font-weight:500">字</span>
<div id="docker" class="a"></div><div class="a" style="left:820px;top:91.500px;width:164px;height:15.500px;background:linear-gradient(#f0f7fd 0,#e2f1fc 20%,#c9e5f9 45%,#aed8f5 65%,#a6d3f3 100%)"></div><span class="t" style="left:826.500px;top:94px;font-size:9.400px;color:#0f2537;font-weight:700;letter-spacing:.1px">变换</span><svg style="left:940px;top:92px" width="46" height="16" viewBox="0 0 46 16"><path d="M3 4.500l2.600 3-2.600 3M6.500 4.500l2.600 3-2.600 3" fill="none" stroke="#3b5d7e" stroke-width="1.200"/><rect x="13.500" y="1.500" width="12.500" height="12.500" rx="1" fill="#bcd6ec" stroke="#5f7f9d" stroke-width="1"/><rect x="16" y="6.500" width="7.500" height="3.500" fill="#fff" stroke="#5f7f9d" stroke-width=".8"/><rect x="28.500" y="1.500" width="13.500" height="12.500" rx="1" fill="#cd6b62" stroke="#93443d" stroke-width="1"/><rect x="29.500" y="2.500" width="11.500" height="5" fill="#dc9089" opacity=".7"/><path d="M32.500 5l5.500 5.500M38 5l-5.500 5.500" stroke="#7c2f28" stroke-width="2.600" opacity=".5"/><path d="M32.500 5l5.500 5.500M38 5l-5.500 5.500" stroke="#fff" stroke-width="1.700"/></svg><div class="a" style="left:820px;top:107px;width:1px;height:617px;background:#dadada"></div><div class="a" style="left:827px;top:697px;width:1px;height:27px;background:#dedede"></div><div class="a" style="left:966px;top:222px;width:1px;height:482px;background:#dcdcdc"></div><div class="a" style="left:836.3px;top:114px;width:16.700px;height:16.700px;border:1px solid #9a9a9a;border-radius:2px;background:linear-gradient(#f7f7f7,#ebebeb 45%,#dddddd 50%,#cfcfcf);box-shadow:inset 0 0 0 1px rgba(255,255,255,.55)"></div><div class="a" style="left:856.2px;top:114px;width:16.700px;height:16.700px;border:1px solid #3c7fb1;border-radius:2px;background:linear-gradient(#d9f0fc,#bfe6fb 45%,#8fd0f5 50%,#6cbfee)"></div><div class="a" style="left:876.1px;top:114px;width:16.700px;height:16.700px;border:1px solid #9a9a9a;border-radius:2px;background:linear-gradient(#f7f7f7,#ebebeb 45%,#dddddd 50%,#cfcfcf);box-shadow:inset 0 0 0 1px rgba(255,255,255,.55)"></div><div class="a" style="left:896px;top:114px;width:16.700px;height:16.700px;border:1px solid #9a9a9a;border-radius:2px;background:linear-gradient(#f7f7f7,#ebebeb 45%,#dddddd 50%,#cfcfcf);box-shadow:inset 0 0 0 1px rgba(255,255,255,.55)"></div><div class="a" style="left:915.6px;top:114px;width:16.700px;height:16.700px;border:1px solid #9a9a9a;border-radius:2px;background:linear-gradient(#f7f7f7,#ebebeb 45%,#dddddd 50%,#cfcfcf);box-shadow:inset 0 0 0 1px rgba(255,255,255,.55)"></div><svg style="left:0;top:0" width="1000" height="724" viewBox="0 0 1000 724"><path d="M844.600 116.200c1.100 0 1.600 1 1.600 2.200v2.500h2.200c1.200 0 2.200.5 2.200 1.500s-1 1.500-2.200 1.500h-2.300c0 2-.6 4.600-1.500 4.600s-1.500-2.600-1.500-4.600h-2.300c-1.200 0-2.200-.5-2.200-1.500s1-1.500 2.200-1.500h2.200v-2.500c0-1.200.5-2.200 1.600-2.200z" fill="#fafafa" stroke="#7d7d7d" stroke-width="1"/><path d="M861.700 123a4.500 4.500 0 1 1 3 4.200" fill="none" stroke="#41506a" stroke-width="1.200"/><path d="M859.600 121.600h4.200l-2.100 2.900z" fill="#27354f"/><circle cx="866" cy="123" r="1.700" fill="#e8f5fd" opacity=".7"/><path d="M878.500 123.500l3-5.500h7.500l-3 5.500zM878.500 123.500l2.500 5h6l2-5" fill="#f6f6f6" stroke="#8a8a8a" stroke-width=".9"/><path d="M890.500 117.500v5.500" stroke="#222" stroke-width="1"/><circle cx="890.500" cy="123.500" r="1.300" fill="#111"/><rect x="898.500" y="121.500" width="6.500" height="6.500" fill="#fff" stroke="#666" stroke-width="1"/><path d="M901.800 117v3.500M906.500 124.800h4.500" stroke="#333" stroke-width="1"/><circle cx="901.800" cy="117.500" r="1" fill="#222"/><path d="M909.500 123.300l2.200 1.500-2.200 1.500z" fill="#222"/><path d="M919 121.500h6.500l5 5.500h-6.500z" fill="#f8f8f8" stroke="#555" stroke-width="1.100"/><path d="M920.500 118.500h6" stroke="#333" stroke-width="1"/><path d="M920 118.500l2.300-1.500v3zM927 118.500l-2.300-1.500v3z" fill="#222"/><path d="M835 137.500h111" stroke="#bdbdbd" stroke-width="1"/><path d="M835 138.500h111" stroke="#fbfbfb" stroke-width="1"/><path d="M835 329.500h111" stroke="#bdbdbd" stroke-width="1"/><path d="M835 330.500h111" stroke="#fbfbfb" stroke-width="1"/><defs><linearGradient id="gg" x1="0" y1="0" x2="0" y2="1"><stop offset="0" stop-color="#cfd0ee"/><stop offset=".5" stop-color="#a3a4d6"/><stop offset="1" stop-color="#8687c4"/></linearGradient></defs><rect x="914" y="288.500" width="22.500" height="22" fill="url(#gg)" stroke="#7f80b8" stroke-width=".8"/><path d="M917.75 288.500v22M914 292.17h22.500M921.50 288.500v22M914 295.84h22.500M925.25 288.500v22M914 299.51h22.500M929.00 288.500v22M914 303.18h22.500M932.75 288.500v22M914 306.85h22.500" stroke="#6f70ae" stroke-width=".7" fill="none" opacity=".8"/><rect x="914.60" y="289.00" width="1.600" height="1.600" fill="#e9e9fb" opacity="0.90"/><rect x="914.60" y="292.67" width="1.600" height="1.600" fill="#e9e9fb" opacity="0.80"/><rect x="914.60" y="296.34" width="1.600" height="1.600" fill="#e9e9fb" opacity="0.70"/><rect x="914.60" y="300.01" width="1.600" height="1.600" fill="#e9e9fb" opacity="0.60"/><rect x="914.60" y="303.68" width="1.600" height="1.600" fill="#e9e9fb" opacity="0.50"/><rect x="914.60" y="307.35" width="1.600" height="1.600" fill="#e9e9fb" opacity="0.40"/><rect x="918.35" y="289.00" width="1.600" height="1.600" fill="#e9e9fb" opacity="0.90"/><rect x="918.35" y="292.67" width="1.600" height="1.600" fill="#e9e9fb" opacity="0.80"/><rect x="918.35" y="296.34" width="1.600" height="1.600" fill="#e9e9fb" opacity="0.70"/><rect x="918.35" y="300.01" width="1.600" height="1.600" fill="#e9e9fb" opacity="0.60"/><rect x="918.35" y="303.68" width="1.600" height="1.600" fill="#e9e9fb" opacity="0.50"/><rect x="918.35" y="307.35" width="1.600" height="1.600" fill="#e9e9fb" opacity="0.40"/><rect x="922.10" y="289.00" width="1.600" height="1.600" fill="#e9e9fb" opacity="0.90"/><rect x="922.10" y="292.67" width="1.600" height="1.600" fill="#e9e9fb" opacity="0.80"/><rect x="922.10" y="296.34" width="1.600" height="1.600" fill="#e9e9fb" opacity="0.70"/><rect x="922.10" y="300.01" width="1.600" height="1.600" fill="#e9e9fb" opacity="0.60"/><rect x="922.10" y="303.68" width="1.600" height="1.600" fill="#e9e9fb" opacity="0.50"/><rect x="922.10" y="307.35" width="1.600" height="1.600" fill="#e9e9fb" opacity="0.40"/><rect x="925.85" y="289.00" width="1.600" height="1.600" fill="#e9e9fb" opacity="0.90"/><rect x="925.85" y="292.67" width="1.600" height="1.600" fill="#e9e9fb" opacity="0.80"/><rect x="925.85" y="296.34" width="1.600" height="1.600" fill="#e9e9fb" opacity="0.70"/><rect x="925.85" y="300.01" width="1.600" height="1.600" fill="#e9e9fb" opacity="0.60"/><rect x="925.85" y="303.68" width="1.600" height="1.600" fill="#e9e9fb" opacity="0.50"/><rect x="925.85" y="307.35" width="1.600" height="1.600" fill="#e9e9fb" opacity="0.40"/><rect x="929.60" y="289.00" width="1.600" height="1.600" fill="#e9e9fb" opacity="0.90"/><rect x="929.60" y="292.67" width="1.600" height="1.600" fill="#e9e9fb" opacity="0.80"/><rect x="929.60" y="296.34" width="1.600" height="1.600" fill="#e9e9fb" opacity="0.70"/><rect x="929.60" y="300.01" width="1.600" height="1.600" fill="#e9e9fb" opacity="0.60"/><rect x="929.60" y="303.68" width="1.600" height="1.600" fill="#e9e9fb" opacity="0.50"/><rect x="929.60" y="307.35" width="1.600" height="1.600" fill="#e9e9fb" opacity="0.40"/><rect x="933.35" y="289.00" width="1.600" height="1.600" fill="#e9e9fb" opacity="0.90"/><rect x="933.35" y="292.67" width="1.600" height="1.600" fill="#e9e9fb" opacity="0.80"/><rect x="933.35" y="296.34" width="1.600" height="1.600" fill="#e9e9fb" opacity="0.70"/><rect x="933.35" y="300.01" width="1.600" height="1.600" fill="#e9e9fb" opacity="0.60"/><rect x="933.35" y="303.68" width="1.600" height="1.600" fill="#e9e9fb" opacity="0.50"/><rect x="933.35" y="307.35" width="1.600" height="1.600" fill="#e9e9fb" opacity="0.40"/><path d="M934.500 288c1-1.500 2.500-2 4-1.800v-1.700l3.200 3.300-3.200 3.300v-1.800c-1.200-.2-2.200 0-3 .8z" fill="#fff" stroke="#333" stroke-width=".9"/><rect x="842.5" y="278.5" width="9.500" height="9.500" fill="#f6f6f6" stroke="#c6c6c6" stroke-width="1"/><rect x="861.5" y="278.5" width="9.500" height="9.500" fill="#f6f6f6" stroke="#c6c6c6" stroke-width="1"/><rect x="880.5" y="278.5" width="9.500" height="9.500" fill="#f6f6f6" stroke="#c6c6c6" stroke-width="1"/><rect x="842.5" y="294.0" width="9.500" height="9.500" fill="#f6f6f6" stroke="#c6c6c6" stroke-width="1"/><circle cx="866.300" cy="298.600" r="4.600" fill="#f4f4f4" stroke="#b5b5b5" stroke-width="1"/><circle cx="866.300" cy="298.600" r="2" fill="#a8a8a8"/><rect x="880.5" y="294.0" width="9.500" height="9.500" fill="#f6f6f6" stroke="#c6c6c6" stroke-width="1"/><rect x="842.5" y="310.0" width="9.500" height="9.500" fill="#f6f6f6" stroke="#c6c6c6" stroke-width="1"/><rect x="861.5" y="310.0" width="9.500" height="9.500" fill="#f6f6f6" stroke="#c6c6c6" stroke-width="1"/><rect x="880.5" y="310.0" width="9.500" height="9.500" fill="#f6f6f6" stroke="#c6c6c6" stroke-width="1"/><rect x="837" y="259.500" width="10" height="10" fill="#f7f7f7" stroke="#b0b0b0" stroke-width="1"/></svg><span class="t" style="left:835px;top:147.5px;font-size:9.6px;color:#000;font-weight:500;text-shadow:0 0 .3px rgba(0,0,0,.5)">旋转:</span><span class="t" style="left:835px;top:169.5px;font-size:9.6px;color:#000;font-weight:500;text-shadow:0 0 .3px rgba(0,0,0,.5)">角度:</span><span class="t" style="left:835px;top:191px;font-size:9.6px;color:#000;font-weight:500;text-shadow:0 0 .3px rgba(0,0,0,.5)">中心:</span><span class="t" style="left:842px;top:212px;font-size:9.6px;color:#8c8c8c;">水平:</span><span class="t" style="left:842px;top:233px;font-size:9.6px;color:#8c8c8c;">垂直:</span><span class="t" style="left:940.5px;top:169.5px;font-size:9.6px;color:#a2a2a2;">度</span><span class="t" style="left:940px;top:211.5px;font-size:8.6px;color:#9c9c9c;letter-spacing:-.3px">mm</span><span class="t" style="left:940px;top:232.5px;font-size:8.6px;color:#9c9c9c;letter-spacing:-.3px">mm</span><span class="t" style="left:848.5px;top:260px;font-size:9.6px;color:#222;">相对中心</span><div class="a" style="left:872px;top:166px;width:59px;height:18.5px;border:1px solid #b9b9b9;background:#f1f1f1;box-shadow:inset 0 0 0 1px #f9f9f9"></div><div class="a" style="left:916px;top:167px;width:14px;height:16.5px;border-left:1px solid #cfcfcf;background:#f4f4f4"></div><div class="a" style="left:916px;top:174.75px;width:14px;height:1px;background:#d6d6d6"></div><svg style="left:916px;top:166px" width="14" height="18.5" viewBox="0 0 14 18.5"><path d="M5.500 6.25l1.800-2 1.800 2zM5.500 12.25l1.800 2 1.800-2z" fill="#9a9a9a"/></svg><span class="t" style="left:875px;top:168px;font-size:9px;color:#7c7c7c">.5</span><div class="a" style="left:872px;top:208px;width:63px;height:18.5px;border:1px solid #b9b9b9;background:#f1f1f1;box-shadow:inset 0 0 0 1px #f9f9f9"></div><div class="a" style="left:920px;top:209px;width:14px;height:16.5px;border-left:1px solid #cfcfcf;background:#f4f4f4"></div><div class="a" style="left:920px;top:216.75px;width:14px;height:1px;background:#d6d6d6"></div><svg style="left:920px;top:208px" width="14" height="18.5" viewBox="0 0 14 18.5"><path d="M5.500 6.25l1.800-2 1.800 2zM5.500 12.25l1.800 2 1.800-2z" fill="#9a9a9a"/></svg><span class="t" style="left:875px;top:210px;font-size:9px;color:#7c7c7c">45.816</span><div class="a" style="left:872px;top:229px;width:63px;height:18.5px;border:1px solid #b9b9b9;background:#f1f1f1;box-shadow:inset 0 0 0 1px #f9f9f9"></div><div class="a" style="left:920px;top:230px;width:14px;height:16.5px;border-left:1px solid #cfcfcf;background:#f4f4f4"></div><div class="a" style="left:920px;top:237.75px;width:14px;height:1px;background:#d6d6d6"></div><svg style="left:920px;top:229px" width="14" height="18.5" viewBox="0 0 14 18.5"><path d="M5.500 6.25l1.800-2 1.800 2zM5.500 12.25l1.800 2 1.800-2z" fill="#9a9a9a"/></svg><span class="t" style="left:875px;top:231px;font-size:9px;color:#7c7c7c">214.589</span><div class="a" style="left:836px;top:336.5px;width:111px;height:16px;border:1px solid #bdbdbd;border-radius:2px;background:linear-gradient(#f7f7f7,#f2f2f2 50%,#eeeeee);text-align:center;font-size:9.600px;line-height:14px;color:#6c6c6c;will-change:transform">应用到再制</div><div class="a" style="left:836px;top:355.5px;width:111px;height:16px;border:1px solid #bdbdbd;border-radius:2px;background:linear-gradient(#f7f7f7,#f2f2f2 50%,#eeeeee);text-align:center;font-size:9.600px;line-height:14px;color:#6c6c6c;will-change:transform">应用</div><div class="a" style="left:966px;top:107px;width:16px;height:60px;border:1px solid #d0d0d0;border-left:none;border-top:none;border-radius:0 3px 3px 0;background:linear-gradient(90deg,#f4f4f4,#ececec)"></div><div class="a" style="left:965px;top:167px;width:19px;height:55px;border:1px solid #d9d9d9;border-left:none;border-radius:0 3px 3px 0;background:#f8f8f8"></div><svg style="left:966px;top:107px" width="20" height="120" viewBox="0 0 20 120"><rect x="2" y="8" width="7" height="7" rx="2" fill="#f4f4f4" stroke="#4a4d5c" stroke-width="1"/><rect x="5.500" y="11.500" width="6.500" height="6.500" rx="1.500" fill="#fafafa" stroke="#4a4d5c" stroke-width="1"/><path d="M12.500 72.500a3.300 3.300 0 1 0 -1 4.500" fill="none" stroke="#333" stroke-width="1.200"/><path d="M9.500 64v6M6.500 67h6" stroke="#333" stroke-width="1"/><path d="M9.500 62.500l1.500 2h-3zM14 67l-2 1.500v-3z" fill="#222"/><path d="M5 103.500l6 6M11 103.500l-6 6" stroke="#555" stroke-width="1.200"/></svg><span class="t" style="left:954px;top:140px;width:36px;text-align:center;font-size:8.600px;color:#3c3c3c;transform:rotate(90deg);height:11px;line-height:11px;font-weight:500">对象属性</span><span class="t" style="left:962.500px;top:187.500px;width:20px;text-align:center;font-size:8.600px;color:#111;transform:rotate(90deg);height:11px;line-height:11px;font-weight:500">变换</span>
<div id="palette" class="a"></div><svg style="left:0;top:0" width="1000" height="724" viewBox="0 0 1000 724"><rect x="985" y="140.2" width="13.700" height="12.98" fill="#231f1e"/><rect x="985" y="152.88" width="13.700" height="13.57" fill="#3b3836"/><rect x="985" y="166.15" width="13.700" height="13.58" fill="#4b4847"/><rect x="985" y="179.43" width="13.700" height="13.57" fill="#5b5858"/><rect x="985" y="192.7" width="13.700" height="13.57" fill="#6b6969"/><rect x="985" y="205.97" width="13.700" height="13.58" fill="#7e7d7d"/><rect x="985" y="205.47" width="13.700" height="1" fill="#4a4a4a" opacity="0.25"/><rect x="985" y="219.25" width="13.700" height="13.57" fill="#8e8e8e"/><rect x="985" y="218.75" width="13.700" height="1" fill="#4a4a4a" opacity="0.34"/><rect x="985" y="232.52" width="13.700" height="13.58" fill="#a2a2a2"/><rect x="985" y="232.02" width="13.700" height="1" fill="#4a4a4a" opacity="0.43"/><rect x="985" y="245.8" width="13.700" height="13.57" fill="#b8b8b8"/><rect x="985" y="245.3" width="13.700" height="1" fill="#4a4a4a" opacity="0.52"/><rect x="985" y="259.07" width="13.700" height="13.58" fill="#dddddd"/><rect x="985" y="258.57" width="13.700" height="1" fill="#4a4a4a" opacity="0.61"/><rect x="985" y="272.35" width="13.700" height="13.57" fill="#ffffff"/><rect x="985" y="271.85" width="13.700" height="1" fill="#4a4a4a" opacity="0.70"/><rect x="985" y="285.62" width="13.700" height="13.58" fill="#2c1784"/><rect x="985" y="298.9" width="13.700" height="13.58" fill="#1187e0"/><rect x="985" y="312.18" width="13.700" height="13.57" fill="#079a51"/><rect x="985" y="325.45" width="13.700" height="13.58" fill="#fff200"/><rect x="985" y="338.73" width="13.700" height="13.57" fill="#ec3c0b"/><rect x="985" y="352.0" width="13.700" height="13.57" fill="#ee2c7c"/><rect x="985" y="365.27" width="13.700" height="13.58" fill="#a3457f"/><rect x="985" y="378.55" width="13.700" height="13.57" fill="#f7890b"/><rect x="985" y="391.82" width="13.700" height="13.58" fill="#f99c98"/><rect x="985" y="405.1" width="13.700" height="13.58" fill="#746562"/><rect x="985" y="418.38" width="13.700" height="13.57" fill="#b6a9d9"/><rect x="985" y="431.65" width="13.700" height="13.57" fill="#8e7cc0"/><rect x="985" y="444.92" width="13.700" height="13.58" fill="#6181c2"/><rect x="985" y="458.2" width="13.700" height="13.58" fill="#7354a8"/><rect x="985" y="471.48" width="13.700" height="13.57" fill="#7d6e9f"/><rect x="985" y="484.75" width="13.700" height="13.57" fill="#4c5e88"/><rect x="985" y="498.02" width="13.700" height="13.58" fill="#524d6b"/><rect x="985" y="511.3" width="13.700" height="13.58" fill="#5f7590"/><rect x="985" y="524.58" width="13.700" height="13.57" fill="#0f7dd0"/><rect x="985" y="537.85" width="13.700" height="13.57" fill="#5bb6f5"/><rect x="985" y="551.12" width="13.700" height="13.58" fill="#9ab4c8"/><rect x="985" y="564.4" width="13.700" height="13.57" fill="#80949f"/><rect x="985" y="577.67" width="13.700" height="13.58" fill="#5c666b"/><rect x="985" y="590.95" width="13.700" height="13.58" fill="#46474b"/><rect x="985" y="604.23" width="13.700" height="13.57" fill="#3e6763"/><rect x="985" y="617.5" width="13.700" height="13.57" fill="#2a7f76"/><rect x="985" y="630.77" width="13.700" height="13.58" fill="#4e8a90"/><rect x="985" y="644.05" width="13.700" height="13.58" fill="#199a94"/><rect x="985" y="657.33" width="13.700" height="13.57" fill="#189b72"/><rect x="985" y="670.6" width="13.700" height="13.58" fill="#0fb0cf"/><rect x="985" y="683.88" width="13.700" height="13.57" fill="#1b92a8"/><rect x="984.600" y="205" width="1" height="80.500" fill="#555" opacity=".75"/><rect x="998.200" y="205" width="1" height="80.500" fill="#666" opacity=".6"/><rect x="998.700" y="139" width="1.300" height="558" fill="#d9d9d9"/><circle cx="992.200" cy="105.300" r="5" fill="#fbfbfb" stroke="#cbcbcb" stroke-width="1"/><path d="M990.600 102.600l4 2.700-4 2.700z" fill="#111"/><path d="M989.500 120.500l3-2.600 3 2.600z" fill="#8a8a8a"/><rect x="986.500" y="127" width="11" height="11" fill="#fff" stroke="#333" stroke-width="1"/><path d="M986.500 127l11 11M997.500 127l-11 11" stroke="#333" stroke-width=".9"/><path d="M989 703.300h6.500l-3.250 2.800z" fill="#333"/><path d="M989.300 713.500v7.500" stroke="#111" stroke-width="1.400"/><path d="M995.500 713.500v7.500l-4.800-3.750z" fill="#111"/><path d="M986 94.500h1M989 94.500h1M992 94.500h1M995 94.500h1" stroke="#bbb" stroke-width="1"/></svg>
<div class="a" style="left:22px;top:120.500px;width:95px;height:85.500px;background:#f1f1f1;border:1px solid #bcbcbc;box-shadow:2px 2px 3px rgba(0,0,0,.38)"></div><div class="a" style="left:27px;top:125px;width:87px;height:1px;background-image:repeating-linear-gradient(90deg,#c2c2c2 0,#c2c2c2 1.300px,transparent 1.300px,transparent 3px)"></div><div class="a" style="left:24px;top:131px;width:92px;height:18px;border:1px solid #d3def0;border-radius:2px;background:linear-gradient(#f6f8fc,#eef2fa)"></div><div class="a" style="left:24.500px;top:131px;width:15px;height:18px;border:1px solid #b9cbe8;border-radius:2px;background:linear-gradient(#eef3fc,#e2eafa)"></div><svg style="left:0;top:0" width="200" height="220" viewBox="0 0 200 220"><path d="M29.5 134c-1 3-.8 6 0 8.500s1 3 1 4" fill="none" stroke="#555" stroke-width="1.100"/><circle cx="29.2" cy="138.3" r="1.500" fill="#fff" stroke="#444" stroke-width=".8"/><path d="M32 137.5l7 4.200-5.600 3.600z" fill="#111"/><path d="M38.500 152C35.500 153 32.500 154.500 30 156C27 157.800 25.800 160.600 27.400 162.300C29.200 164.200 32.300 163.300 34 160.800C35.800 158 37 155 38.500 152Z" fill="#f8f8f8" stroke="#6a6a6a" stroke-width="1.100"/><path d="M27 178l3-3 1.500 2.500 2.500-6 1 5 3.500-3.500M30 181l3-5.500 1.500 5" fill="none" stroke="#555" stroke-width="1.100"/><circle cx="33.500" cy="195" r="4.300" fill="#eef0f8" stroke="#444" stroke-width="1.100"/><path d="M31 196.500c1-3 3-4 5-3.500" stroke="#7a7f9a" stroke-width="1" fill="none"/><circle cx="27.300" cy="198.500" r="1.600" fill="#fff" stroke="#333" stroke-width=".9"/><path d="M26 190.500h4M28 188.500v4M35.500 188.500l2 2.500" stroke="#333" stroke-width="1"/></svg><span class="t c" style="left:49.500px;top:136px;color:#1c1c1c;font-weight:400">形状</span><span class="t c" style="left:49.500px;top:153px;color:#1c1c1c;font-weight:400">涂抹笔刷</span><span class="t c" style="left:49.500px;top:172px;color:#1c1c1c;font-weight:400">粗糙笔刷</span><span class="t c" style="left:49.500px;top:189px;color:#1c1c1c;font-weight:400">变换</span><span class="t" style="left:83.500px;top:135px;font-size:9.300px;letter-spacing:-.2px;color:#1a1a1a;">F10</span><div class="a" style="left:116px;top:131px;width:72px;height:17.500px;border:1px solid #767676;border-radius:3px;background:linear-gradient(#ffffff,#eef0f6 50%,#e3e5f0);box-shadow:1.500px 1.500px 2px rgba(0,0,0,.4)"></div><span class="t" style="left:120px;top:135px;font-size:9.600px;color:#4c4c4c">形状工具 (F10)</span>
</body></html>
